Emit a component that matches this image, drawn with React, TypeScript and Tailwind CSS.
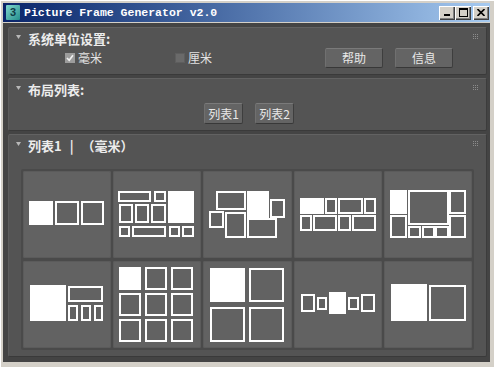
import React from 'react';

type Box = [number, number, number, number, number?];

const grid9: Box[] = [6, 32, 58].flatMap((y) =>
  [6, 32, 58].map((x) => [x, y, 22, 23, x === 6 && y === 6 ? 1 : 0] as Box)
);

const layouts: Box[][] = [
  [[6, 30, 24, 24, 1], [32, 30, 24, 24], [58, 30, 23, 24]],
  [
    [5, 20, 33, 11], [41, 20, 12, 11], [55, 20, 26, 32, 1],
    [6, 33, 14, 19], [22, 33, 14, 19], [38, 33, 15, 19],
    [6, 55, 11, 11], [19, 55, 34, 11], [56, 55, 11, 11], [69, 55, 12, 11],
  ],
  [
    [13, 20, 30, 19], [44, 20, 22, 27, 1], [67, 28, 15, 19],
    [6, 40, 15, 17], [22, 41, 21, 26], [44, 47, 30, 20],
  ],
  [
    [6, 27, 24, 16, 1], [31, 27, 12, 16], [44, 27, 25, 16], [70, 27, 12, 16],
    [6, 44, 12, 16], [19, 44, 24, 16], [44, 44, 13, 16], [58, 44, 24, 16],
  ],
  [
    [6, 19, 17, 24, 1], [24, 19, 41, 35], [65, 19, 17, 24],
    [6, 44, 17, 23], [65, 44, 17, 23],
    [24, 55, 13, 12], [38, 55, 13, 12], [51, 55, 14, 12],
  ],
  [[7, 24, 36, 36, 1], [45, 25, 35, 16], [45, 44, 10, 16], [58, 44, 10, 16], [71, 44, 9, 16]],
  grid9,
  [[7, 7, 35, 34, 1], [46, 7, 35, 34], [7, 46, 35, 35], [46, 46, 35, 35]],
  [[7, 33, 14, 18], [23, 36, 10, 13], [35, 31, 17, 22, 1], [54, 36, 11, 13], [67, 33, 14, 18]],
  [[7, 23, 36, 37, 1], [45, 24, 37, 36]],
];

const Tile = ({ boxes }: { boxes: Box[] }) => (
  <div className="h-[87px] bg-[#626262] rounded-[2px] shadow-[inset_0_0_0_1px_#5b5b5b]">
    <svg width="88" height="87" viewBox="0 0 88 87" className="block" shapeRendering="crispEdges">
      {boxes.map(([x, y, w, h, f], i) =>
        f ? (
          <rect key={i} x={x} y={y} width={w} height={h} fill="#ffffff" />
        ) : (
          <rect key={i} x={x + 1} y={y + 1} width={w - 2} height={h - 2} fill="none" stroke="#ffffff" strokeWidth={2} />
        )
      )}
    </svg>
  </div>
);

const Dots = () => (
  <svg width="6" height="6" className="ml-auto mr-[7px] self-start mt-[6px]">
    {[0, 2, 4].flatMap((y) => [0, 2, 4].map((x) => <rect key={`${x}-${y}`} x={x} y={y} width="1" height="1" fill="#8c8c8c" />))}
  </svg>
);

const Rollout = ({ title, children }: { title: React.ReactNode; children: React.ReactNode }) => (
  <div className="bg-[#545454] rounded-[2px] border border-t-[#626262] border-l-[#5c5c5c] border-r-[#3c3c3c] border-b-[#3a3a3a]">
    <div className="h-[20px] flex items-center pl-[7px]">
      <svg width="5" height="4" className="mb-[3px]">
        <path d="M0 0 H5 L2.5 4 Z" fill="#b8b8b8" />
      </svg>
      <span className="ml-[7px] text-[13px] font-bold text-[#ececec] leading-none whitespace-pre">{title}</span>
      <Dots />
    </div>
    {children}
  </div>
);

const Btn = ({ label, w }: { label: string; w: string }) => (
  <button
    className={`${w} h-full bg-[#646464] rounded-[2px] border border-t-[#7a7a7a] border-l-[#707070] border-r-[#3e3e3e] border-b-[#383838] text-[12px] text-[#e8e8e8] leading-none`}
  >
    {label}
  </button>
);

const Check = ({ on, label }: { on: boolean; label: string }) => (
  <div className="flex items-center">
    <span
      className={`w-[10px] h-[10px] flex items-center justify-center ${
        on ? 'bg-[#9c9c9c]' : 'bg-[#6a6a6a] border border-[#5e5e5e]'
      }`}
    >
      {on && (
        <svg width="8" height="8">
          <path d="M1 4 L3.2 6.3 L7 1.2" stroke="#f2f2f2" strokeWidth="1.6" fill="none" />
        </svg>
      )}
    </span>
    <span className="ml-[3px] text-[12px] text-[#e2e2e2] leading-none">{label}</span>
  </div>
);

const CapBtn = ({ children, className = '' }: { children: React.ReactNode; className?: string }) => (
  <div
    className={`w-[16px] h-[14px] bg-[#d4d0c8] flex items-center justify-center shadow-[inset_1px_1px_#ffffff,inset_-1px_-1px_#404040,inset_-2px_-2px_#808080] ${className}`}
  >
    {children}
  </div>
);

export default function App() {
  return (
    <div
      className="w-[494px] h-[367px] bg-[#d4d0c8] pt-[3px] pl-[3px] pr-[4px] pb-[5px] flex flex-col shadow-[inset_1px_1px_#ffffff]"
      style={{ fontFamily: '"Noto Sans CJK SC", "Noto Sans", sans-serif' }}
    >
      {/* Title bar */}
      <div className="h-[19px] shrink-0 flex items-center bg-gradient-to-r from-[#0a246a] to-[#a6caf0] pl-[3px] pr-[1px]">
        <div className="w-[14px] h-[15px] bg-gradient-to-br from-[#7fd8d0] to-[#1f8f8c] flex items-center justify-center rounded-[1px]">
          <span className="text-[11px] font-bold text-[#0e3c46] leading-none" style={{ fontFamily: '"Liberation Sans", sans-serif' }}>
            3
          </span>
        </div>
        <span
          className="ml-[4px] text-[11.5px] font-bold text-white leading-none"
          style={{ fontFamily: '"Liberation Mono", monospace' }}
        >
          Picture Frame Generator v2.0
        </span>
        <div className="ml-auto flex items-center">
          <CapBtn>
            <svg width="8" height="7">
              <rect x="1" y="5" width="6" height="2" fill="#000" />
            </svg>
          </CapBtn>
          <CapBtn>
            <svg width="9" height="9">
              <rect x="0.5" y="0.5" width="8" height="8" fill="none" stroke="#000" />
              <rect x="0" y="0" width="9" height="2" fill="#000" />
            </svg>
          </CapBtn>
          <CapBtn className="ml-[2px]">
            <svg width="8" height="7">
              <path d="M0.5 0 L7.5 7 M7.5 0 L0.5 7" stroke="#000" strokeWidth="1.6" />
            </svg>
          </CapBtn>
        </div>
      </div>

      {/* Client area */}
      <div className="mt-[1px] flex-1 bg-[#444444] pt-[4px] pl-[5px] pr-[3px] pb-[5px] flex flex-col gap-[3px]">
        <Rollout title="系统单位设置:">
          <div className="h-[20px] flex items-center pl-[56px] pr-[33px] mb-[6px]">
            <div className="w-[110px]">
              <Check on label="毫米" />
            </div>
            <Check on={false} label="厘米" />
            <div className="ml-auto h-full flex gap-[12px]">
              <Btn label="帮助" w="w-[58px]" />
              <Btn label="信息" w="w-[58px]" />
            </div>
          </div>
        </Rollout>

        <Rollout title="布局列表:">
          <div className="h-[21px] mt-[4px] mb-[6px] flex pl-[195px] gap-[12px]">
            <Btn label="列表1" w="w-[39px]" />
            <Btn label="列表2" w="w-[39px]" />
          </div>
        </Rollout>

        <Rollout
          title={
            <>
              列表1<span className="px-[8px]">|</span>（毫米）
            </>
          }
        >
          <div className="mt-[14px] mb-[6px] mx-[12px] bg-[#4a4a4a] p-[2px] rounded-[2px]">
            <div className="grid grid-cols-5 gap-x-[2px] gap-y-[3px]">
              {layouts.map((b, i) => (
                <Tile key={i} boxes={b} />
              ))}
            </div>
          </div>
        </Rollout>
      </div>
    </div>
  );
}
